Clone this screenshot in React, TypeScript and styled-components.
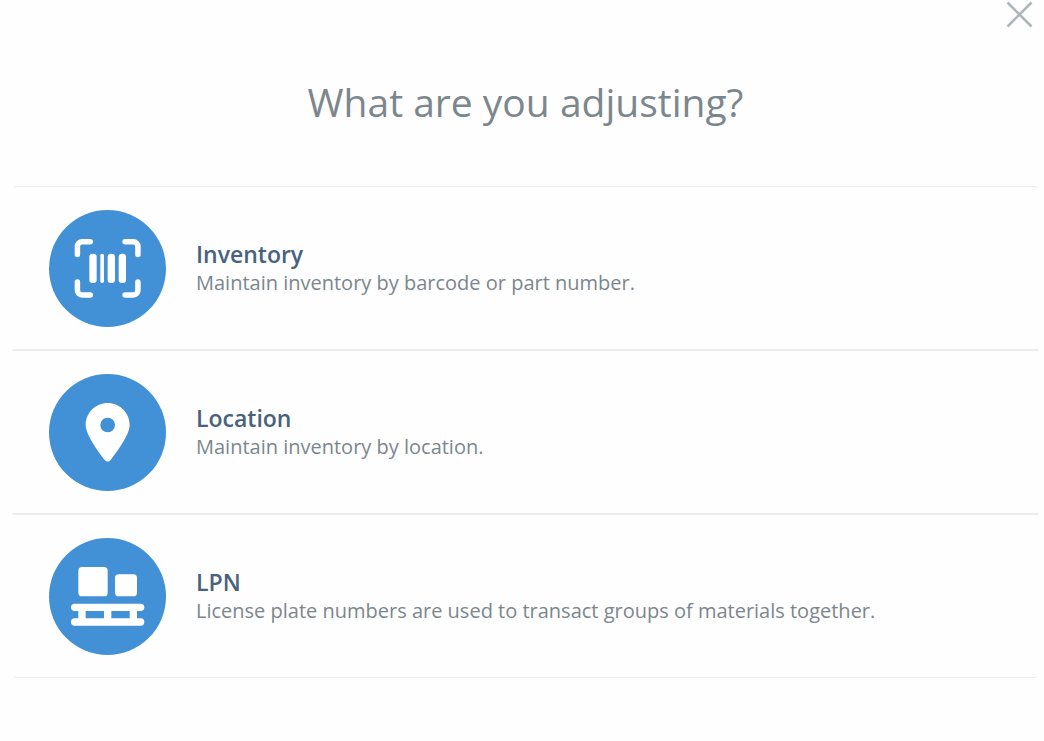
import React from 'react';
import styled, { createGlobalStyle } from 'styled-components';

const GlobalStyle = createGlobalStyle`
  *, *::before, *::after { box-sizing: border-box; }
  body {
    margin: 0;
    background: #fefefe;
    color: #7b878d;
    font-family: 'Open Sans', 'Noto Sans', sans-serif;
  }
`;

const Page = styled.main`
  display: flex;
  flex-direction: column;
  padding: 0 5px 0 12px;
`;

const TopBar = styled.div`
  display: flex;
  justify-content: flex-end;
  padding: 0 5px;
`;

const CloseButton = styled.button`
  display: flex;
  width: 29px;
  height: 29px;
  padding: 0;
  border: 0;
  background: none;
  color: #adb6b9;
  cursor: pointer;
`;

const Title = styled.h1`
  margin: 45px 0 57px;
  font-size: 39px;
  font-weight: 400;
  line-height: 55px;
  text-align: center;
`;

const OptionList = styled.ul`
  margin: 0;
  padding: 0;
  list-style: none;
`;

const Option = styled.button`
  display: flex;
  align-items: center;
  gap: 30px;
  width: 100%;
  padding: 23px 36px 22px;
  border: 1px solid transparent;
  border-top-color: #ececec;
  border-bottom-color: #ececec;
  background: none;
  color: inherit;
  font: inherit;
  text-align: left;
  cursor: pointer;

  li:first-child > & { border-radius: 5px 5px 0 0; }
  li:last-child > & { border-radius: 0 0 5px 5px; }
`;

const IconDisc = styled.span`
  display: flex;
  flex: none;
  width: 117px;
  height: 117px;
  align-items: center;
  justify-content: center;
  border-radius: 50%;
  background: #4290d6;
  color: #fff;
`;

const OptionText = styled.span`
  display: flex;
  flex-direction: column;
  gap: 1px;
  padding-bottom: 1px;
`;

const OptionName = styled.span`
  color: #48627e;
  font-size: 23px;
  font-weight: 600;
  line-height: 28px;
`;

const OptionDetail = styled.span`
  font-size: 20px;
  line-height: 28px;
`;

const Glyph = ({ children }: { children: React.ReactNode }) => (
  <svg width="117" height="117" viewBox="0 0 117 117" fill="currentColor" aria-hidden="true">
    <g transform="translate(22 29) scale(0.11458)">{children}</g>
  </svg>
);

const BarcodeIcon = () => (
  <Glyph>
    <path
      d="M168 24H96a40 40 0 0 0-40 40V136M472 24H544a40 40 0 0 1 40 40V136M168 488H96a40 40 0 0 1-40-40V376M472 488H544a40 40 0 0 0 40-40V376"
      fill="none"
      stroke="currentColor"
      strokeWidth="48"
      strokeLinecap="round"
    />
    <rect x="160" y="128" width="64" height="256" rx="28" />
    <rect x="256" y="128" width="32" height="256" rx="16" />
    <rect x="320" y="128" width="64" height="256" rx="28" />
    <rect x="416" y="128" width="64" height="256" rx="28" />
  </Glyph>
);

const PinIcon = () => (
  <Glyph>
    <path
      transform="translate(128 0)"
      d="M215.7 499.2C267 435 384 279.4 384 192C384 86 298 0 192 0S0 86 0 192c0 87.4 117 243 168.3 307.2c12.3 15.3 35.1 15.3 47.4 0zM192 128a64 64 0 1 1 0 128a64 64 0 1 1 0-128z"
    />
  </Glyph>
);

const PalletIcon = () => (
  <Glyph>
    <rect x="64" y="0" width="256" height="256" rx="32" />
    <rect x="384" y="64" width="192" height="192" rx="32" />
    <rect x="0" y="320" width="640" height="64" rx="32" />
    <rect x="0" y="448" width="640" height="64" rx="32" />
    <path d="M64 352h64v128H64zM288 352h64v128h-64zM512 352h64v128h-64z" />
  </Glyph>
);

const options = [
  { name: 'Inventory', detail: 'Maintain inventory by barcode or part number.', Icon: BarcodeIcon },
  { name: 'Location', detail: 'Maintain inventory by location.', Icon: PinIcon },
  {
    name: 'LPN',
    detail: 'License plate numbers are used to transact groups of materials together.',
    Icon: PalletIcon,
  },
];

export default function App() {
  return (
    <>
      <GlobalStyle />
      <Page>
        <TopBar>
          <CloseButton type="button" aria-label="Close">
            <svg width="29" height="29" viewBox="0 0 29 29" fill="none" stroke="currentColor" strokeWidth="2.6" aria-hidden="true">
              <path d="M2.5 2.5l24 24M26.5 2.5l-24 24" />
            </svg>
          </CloseButton>
        </TopBar>
        <Title>What are you adjusting?</Title>
        <OptionList>
          {options.map(({ name, detail, Icon }) => (
            <li key={name}>
              <Option type="button">
                <IconDisc>
                  <Icon />
                </IconDisc>
                <OptionText>
                  <OptionName>{name}</OptionName>
                  <OptionDetail>{detail}</OptionDetail>
                </OptionText>
              </Option>
            </li>
          ))}
        </OptionList>
      </Page>
    </>
  );
}
